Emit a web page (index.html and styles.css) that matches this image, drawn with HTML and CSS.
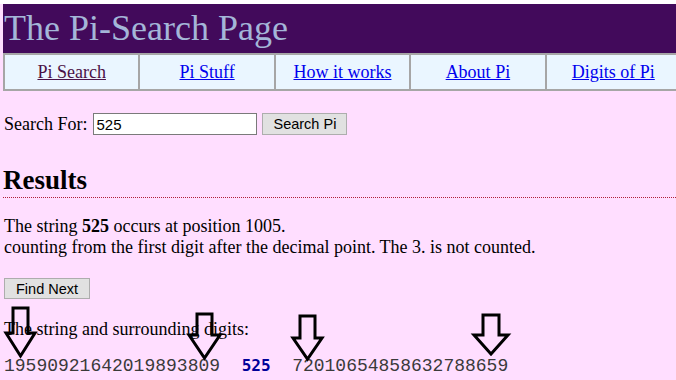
FILE: index.html
```html
<!DOCTYPE html>
<html lang="en">
<head>
    <meta charset="UTF-8">
    <title>The Pi-Search Page</title>
    <link rel="stylesheet" href="styles.css">
</head>
<body>
    <header class="masthead"><h1>The Pi-Search Page</h1></header>
    <nav class="menu">
        <div class="menu-item"><a class="current" href="#">Pi Search</a></div>
        <div class="menu-item"><a href="#">Pi Stuff</a></div>
        <div class="menu-item"><a href="#">How it works</a></div>
        <div class="menu-item"><a href="#">About Pi</a></div>
        <div class="menu-item"><a href="#">Digits of Pi</a></div>
    </nav>

    <form class="search-form" onsubmit="return false">
        <label for="query">Search For:</label>
        <input type="text" id="query" class="search-input" value="525">
        <button type="button" class="btn">Search Pi</button>
    </form>

    <h2 class="results-title">Results</h2>
    <p class="result-text">The string <b>525</b> occurs at position 1005.<br>counting from the first digit after the decimal point. The 3. is not counted.</p>
    <button type="button" class="btn find-next">Find Next</button>

    <div class="surround">
        <p class="surround-label">The string and surrounding digits:</p>
        <div class="digits">19590921642019893809  <b>525</b>  72010654858632788659</div>
        <svg class="arrows" viewBox="0 300 676 80" width="676" height="80">
            <path d="M13 307 H28 V332 H35 L20.5 355 L6 332 H13 Z"/>
            <path d="M197 313 H212 V334 H220 L204.5 357 L189 334 H197 Z"/>
            <path d="M300 315 H315 V337 H322 L307.5 358 L293 337 H300 Z"/>
            <path d="M483 314 H499 V334 H508 L491 353 L474 334 H483 Z"/>
        </svg>
    </div>
</body>
</html>
```

FILE: styles.css
```css
html { overflow: hidden; background: #fff; }
body { margin: 4px 0 0; padding-left: 3px; min-height: calc(100vh - 4px); background: #ffdeff; font-family: "Liberation Serif", "Times New Roman", serif; font-size: 18px; color: #000; }

.masthead h1 { margin: 0; height: 49px; line-height: 49px; padding-left: 1px; font-size: 36px; font-weight: normal; color: #a4b6d8; background: #420a5b; }

.menu { display: grid; grid-template-columns: repeat(5, 1fr); width: 677px; background: #eaf6ff; border: 2px solid #a6a6a6; border-right: 0; }
.menu-item { border-right: 2px solid #a6a6a6; text-align: center; padding-top: 1px; line-height: 33px; }
.menu a { color: #0000ee; }
.menu a.current { color: #4b1248; }

.search-form { display: flex; align-items: center; gap: 5px; margin-top: 22px; padding-left: 1px; }
.search-form label { margin-right: 1px; }
.search-input { box-sizing: border-box; width: 164px; height: 22px; margin: 0; padding: 0 2px; border: 1px solid #7a7a7a; background: #fff; font-family: "Liberation Sans", Arial, sans-serif; font-size: 15px; color: #000; }
.btn { box-sizing: border-box; height: 22px; margin: 0; padding: 0 10px; border: 1px solid #adadad; background: #e1e1e1; font-family: "Liberation Sans", Arial, sans-serif; font-size: 14.5px; color: #000; }

.results-title { margin: 30px 0 0; padding-bottom: 1px; font-size: 27px; line-height: 31px; border-bottom: 1px dotted #b0203a; }
.result-text { margin: 18px 0 0; padding-left: 1px; line-height: 21px; }
.find-next { display: block; height: 21px; margin: 20px 0 0 1px; padding: 0 11px; }

.surround { position: relative; margin-top: 20px; }
.surround-label { margin: 0; padding-left: 1px; line-height: 21px; }
.digits { margin-top: 16px; padding-left: 1px; line-height: 21px; white-space: pre; font-family: "Liberation Mono", "Courier New", monospace; font-size: 18px; color: #3a3a3a; }
.digits b { font-family: "DejaVu Sans Mono", monospace; font-size: 16px; line-height: 1; color: #000099; }
.arrows { position: absolute; left: -3px; top: -18px; overflow: visible; pointer-events: none; }
.arrows path { fill: none; stroke: #000; stroke-width: 3; stroke-linejoin: miter; }
```
